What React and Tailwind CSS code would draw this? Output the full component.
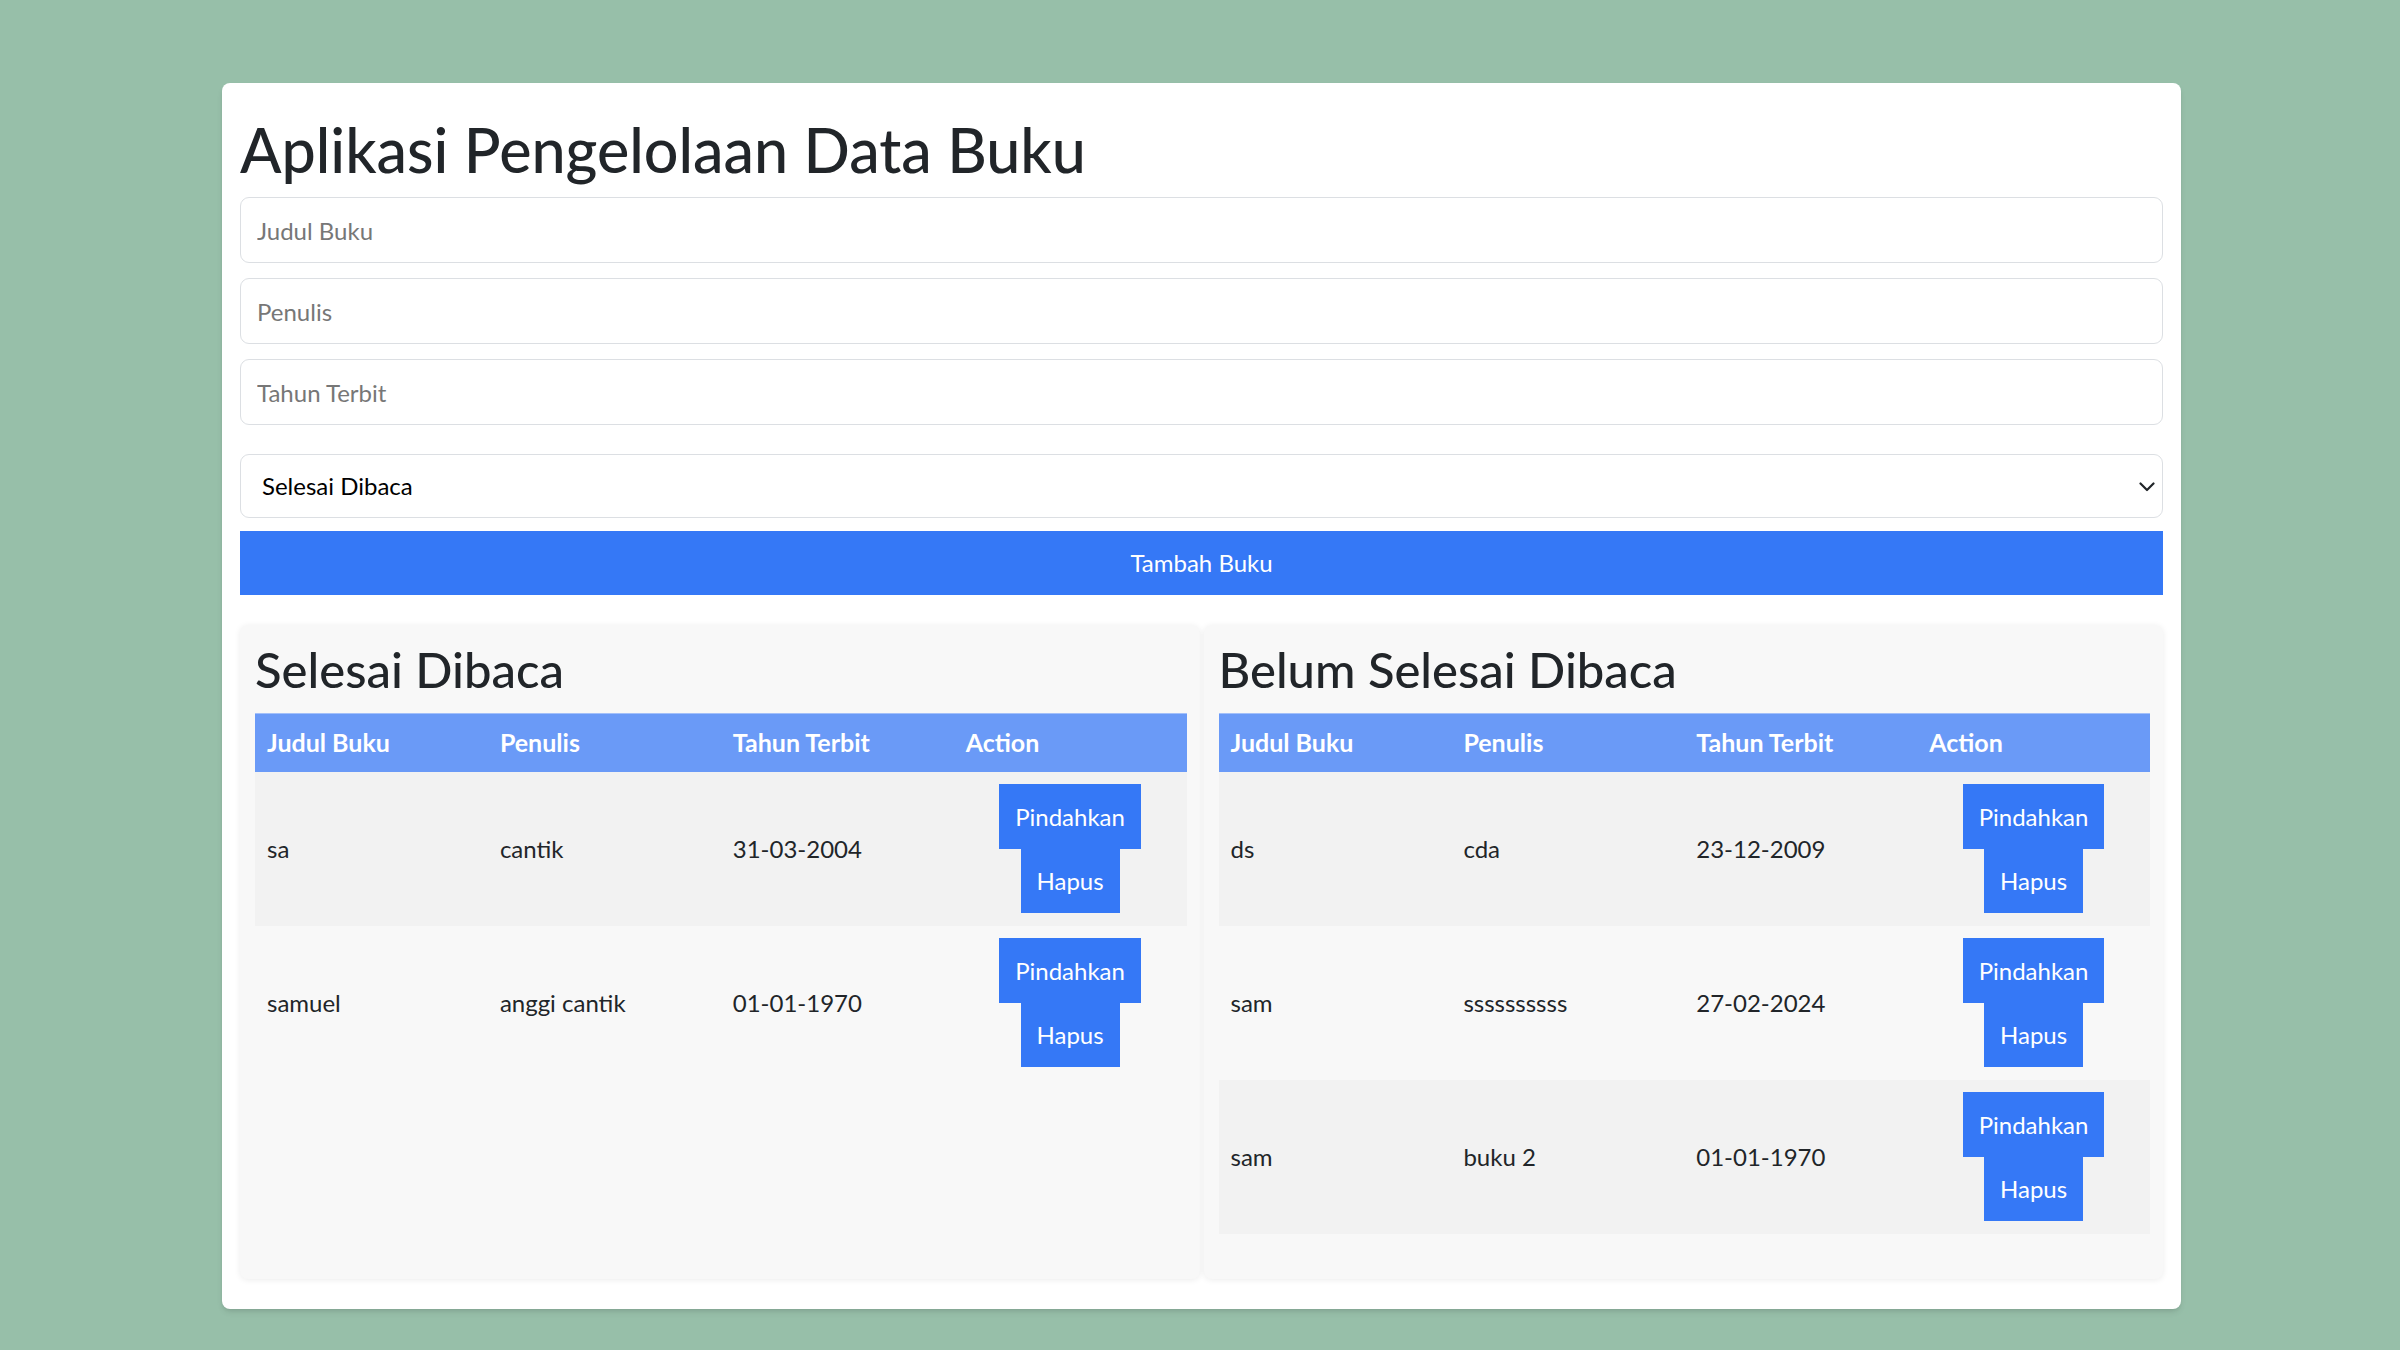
import React from 'react';

const selesai = [
  { judul: 'sa', penulis: 'cantik', tahun: '31-03-2004' },
  { judul: 'samuel', penulis: 'anggi cantik', tahun: '01-01-1970' },
];

const belum = [
  { judul: 'ds', penulis: 'cda', tahun: '23-12-2009' },
  { judul: 'sam', penulis: 'ssssssssss', tahun: '27-02-2024' },
  { judul: 'sam', penulis: 'buku 2', tahun: '01-01-1970' },
];

const BookTable = ({ title, books }) => (
  <div className="bg-[#f8f8f8] rounded-[8px] shadow-[0_1px_6px_rgba(0,0,0,0.08)] pt-[15px] pb-[45px] pl-[15px] pr-[13px]">
    <h2 className="text-[49px] leading-[59px] font-medium text-[#212529] mb-[14px]">{title}</h2>
    <table className="w-full table-fixed border-collapse text-[24px] text-[#212529]">
      <thead>
        <tr className="bg-[#6a9af7] text-white">
          <th className="text-left font-bold text-[25px] px-[12px] pt-[11px] pb-[12px] leading-[35px] border-t border-[#a3c0fa]">Judul Buku</th>
          <th className="text-left font-bold text-[25px] px-[12px] pt-[11px] pb-[12px] leading-[35px] border-t border-[#a3c0fa]">Penulis</th>
          <th className="text-left font-bold text-[25px] px-[12px] pt-[11px] pb-[12px] leading-[35px] border-t border-[#a3c0fa]">Tahun Terbit</th>
          <th className="text-left font-bold text-[25px] px-[12px] pt-[11px] pb-[12px] leading-[35px] border-t border-[#a3c0fa]">Action</th>
        </tr>
      </thead>
      <tbody>
        {books.map((b, i) => (
          <tr key={i} className={i % 2 === 0 ? 'bg-[#f2f2f2]' : ''}>
            <td className="px-[12px] py-[12px] align-middle">{b.judul}</td>
            <td className="px-[12px] py-[12px] align-middle">{b.penulis}</td>
            <td className="px-[12px] py-[12px] align-middle">{b.tahun}</td>
            <td className="px-[12px] pt-[12px] pb-[13px] align-middle">
              <div className="flex flex-col items-center">
                <button className="h-[65px] px-[16px] bg-[#3578f6] text-white text-[24px]">Pindahkan</button>
                <button className="h-[64px] px-[16px] bg-[#3578f6] text-white text-[24px]">Hapus</button>
              </div>
            </td>
          </tr>
        ))}
      </tbody>
    </table>
  </div>
);

const App = () => {
  return (
    <div className="min-h-screen bg-[#97bfa9] pt-[83px] pb-[41px] font-['Lato',sans-serif]">
      {/* Main card */}
      <div className="w-[1959px] ml-[222px] bg-white rounded-[8px] shadow-md px-[18px] pt-[29px] pb-[30px]">
        <h1 className="text-[61px] leading-[76px] font-medium text-[#212529] mb-[9px]">Aplikasi Pengelolaan Data Buku</h1>

        <div className="flex flex-col gap-[15px]">
          <input className="h-[66px] w-full border border-[#dcdfe3] rounded-[9px] px-[16px] text-[24px] text-[#212529] placeholder:text-[#777] outline-none" placeholder="Judul Buku" />
          <input className="h-[66px] w-full border border-[#dcdfe3] rounded-[9px] px-[16px] text-[24px] text-[#212529] placeholder:text-[#777] outline-none" placeholder="Penulis" />
          <input className="h-[66px] w-full border border-[#dcdfe3] rounded-[9px] px-[16px] text-[24px] text-[#212529] placeholder:text-[#777] outline-none" placeholder="Tahun Terbit" />
        </div>

        <div className="relative mt-[29px]">
          <select className="appearance-none h-[64px] w-full border border-[#dcdfe3] rounded-[9px] pl-[21px] pr-[40px] text-[24px] text-black bg-white outline-none" defaultValue="selesai">
            <option value="selesai">Selesai Dibaca</option>
            <option value="belum">Belum Selesai Dibaca</option>
          </select>
          <svg className="absolute right-[8px] top-[28px] pointer-events-none" width="16" height="10" viewBox="0 0 16 10" fill="none">
            <polyline points="1.5,1.5 8,8 14.5,1.5" stroke="#212529" strokeWidth="2.2" strokeLinecap="round" strokeLinejoin="round" />
          </svg>
        </div>

        <button className="mt-[13px] h-[64px] w-full bg-[#3578f6] text-white text-[24px]">Tambah Buku</button>

        <div className="grid grid-cols-2 gap-[4px] mt-[30px]">
          <BookTable title="Selesai Dibaca" books={selesai} />
          <BookTable title="Belum Selesai Dibaca" books={belum} />
        </div>
      </div>
    </div>
  );
};

export default App;
